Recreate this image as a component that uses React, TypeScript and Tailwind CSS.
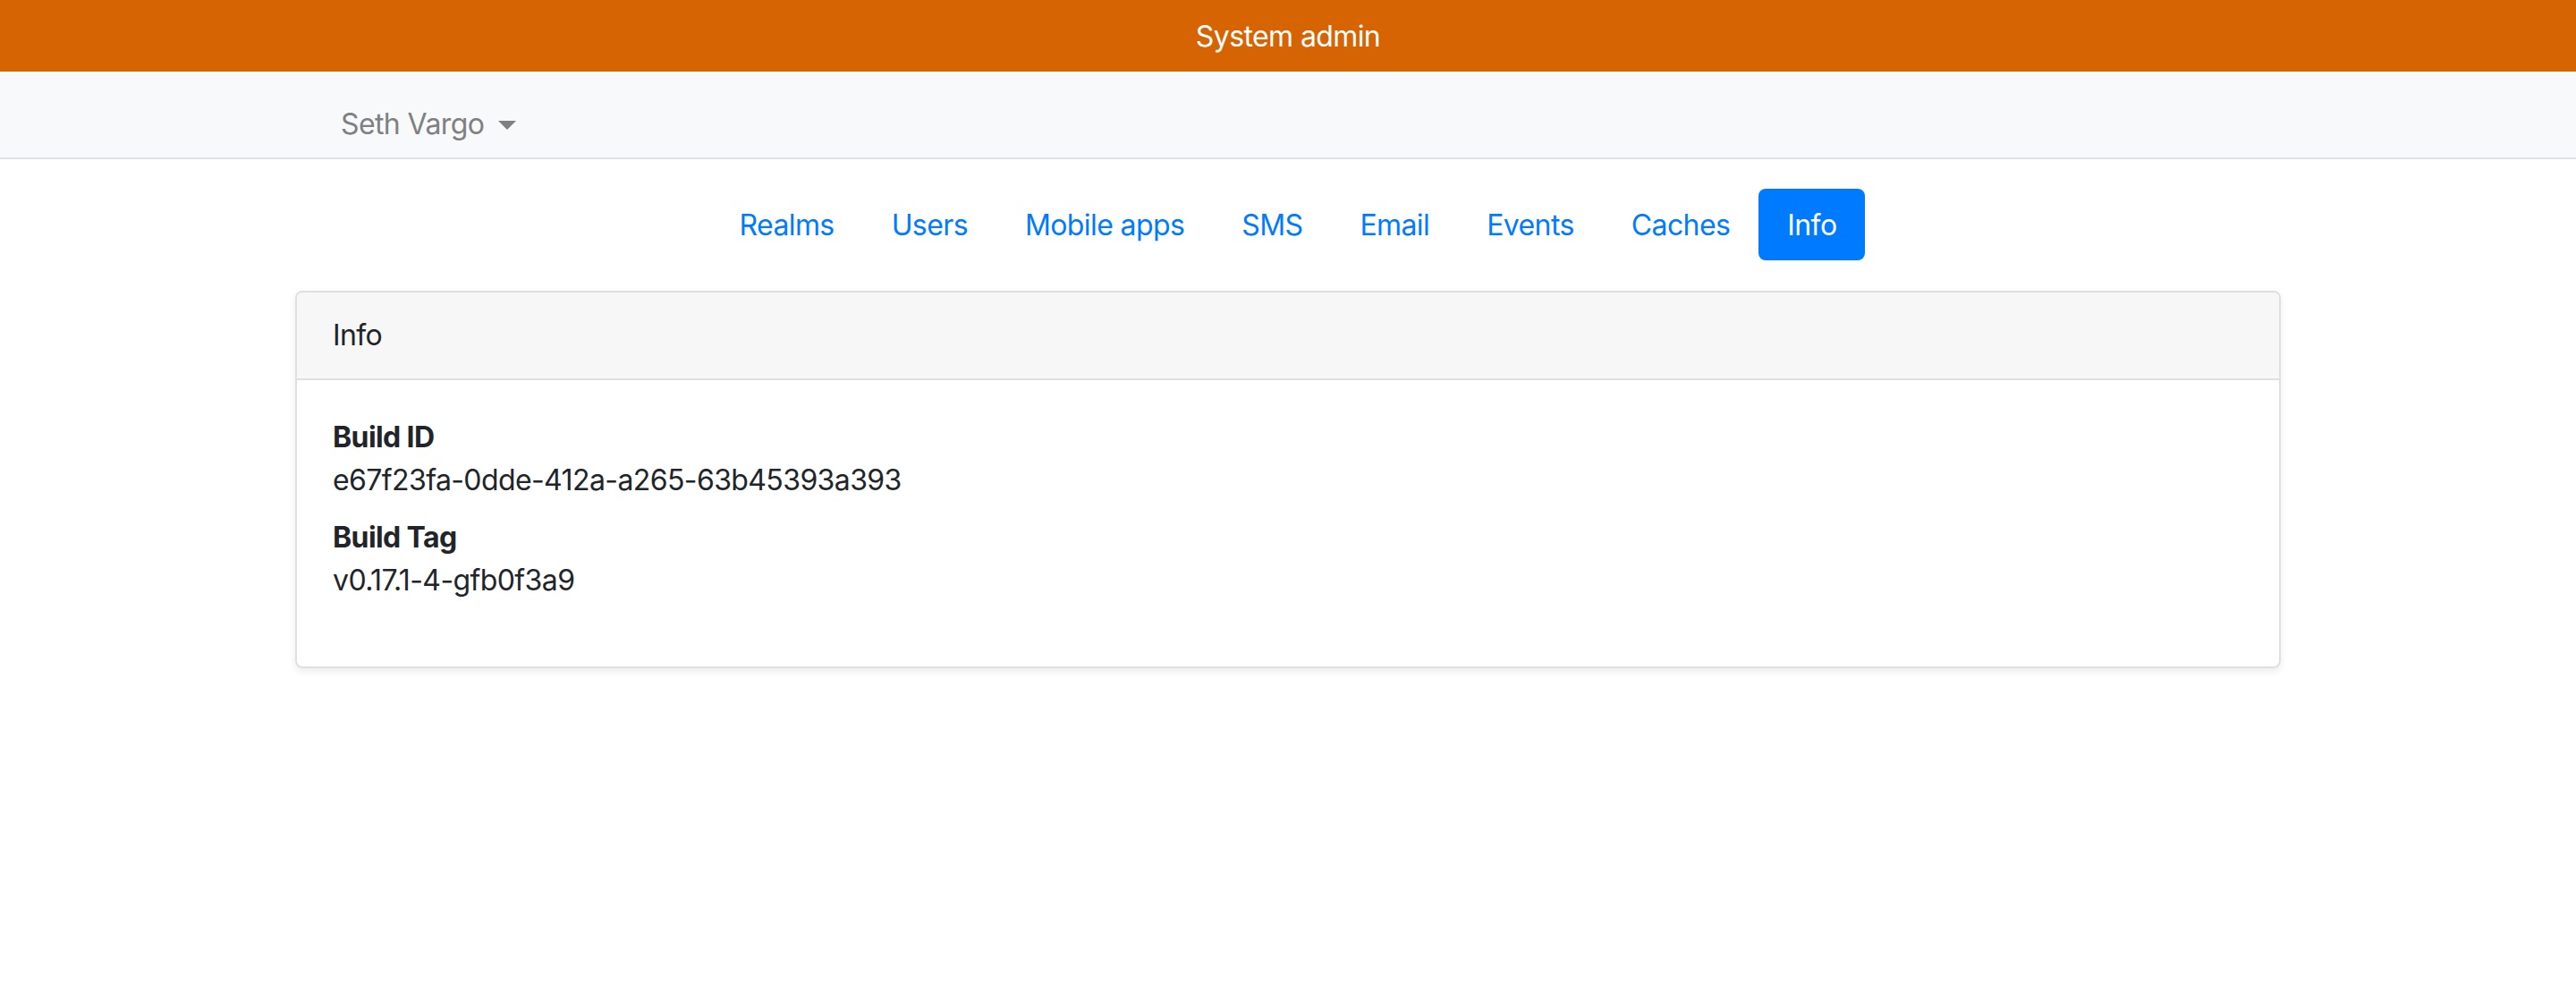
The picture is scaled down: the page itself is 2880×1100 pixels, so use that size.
import { Fragment } from "react";

const tabs = ["Realms", "Users", "Mobile apps", "SMS", "Email", "Events", "Caches", "Info"];

const App = () => {
  const active = "Info";

  return (
    <div className="min-h-screen bg-white text-[32px] leading-[48px] tracking-[-0.6px] text-[#212529] font-['Inter','Liberation_Sans',sans-serif]">
      <div className="h-[80px] bg-[#d66403] flex items-center justify-center text-white pt-[2px]">
        System admin
      </div>

      <nav className="h-[98px] bg-[#f8f9fa] border-b-2 border-[#dee2e6]">
        <div className="max-w-[2280px] mx-auto px-[30px] pt-[35px]">
          <button className="flex items-center pl-[51px] text-[#7f8081] tracking-[-0.6px]">
            Seth Vargo
            <span className="ml-[16px] mt-[2px] w-0 h-0 border-l-[10px] border-r-[10px] border-t-[10px] border-l-transparent border-r-transparent border-t-[#7f8081]" />
          </button>
        </div>
      </nav>

      <div className="max-w-[2280px] mx-auto px-[30px]">
        <ul className="flex justify-center mt-[33px] mb-[34px]">
          {tabs.map((t) => (
            <li key={t}>
              <a
                href="#"
                className={
                  t === active
                    ? "block px-[32px] pt-[17px] pb-[15px] rounded-[8px] bg-[#007bff] text-white"
                    : "block px-[32px] pt-[17px] pb-[15px] rounded-[8px] text-[#007bff]"
                }
              >
                {t}
              </a>
            </li>
          ))}
        </ul>

        <div className="border-2 border-[#dfdfdf] rounded-[8px] shadow-[0_4px_8px_rgba(0,0,0,0.075)] overflow-hidden">
          <div className="bg-[#f7f7f7] border-b-2 border-[#dfdfdf] px-[40px] py-[24px]">Info</div>
          <div className="p-[40px]">
            <dl className="mb-[32px]">
              {[
                ["Build ID", "e67f23fa-0dde-412a-a265-63b45393a393"],
                ["Build Tag", "v0.17.1-4-gfb0f3a9"],
              ].map(([k, v]) => (
                <Fragment key={k}>
                  <dt className="font-bold">{k}</dt>
                  <dd className="mb-[16px] last:mb-0">{v}</dd>
                </Fragment>
              ))}
            </dl>
          </div>
        </div>
      </div>
    </div>
  );
};

export default App;
